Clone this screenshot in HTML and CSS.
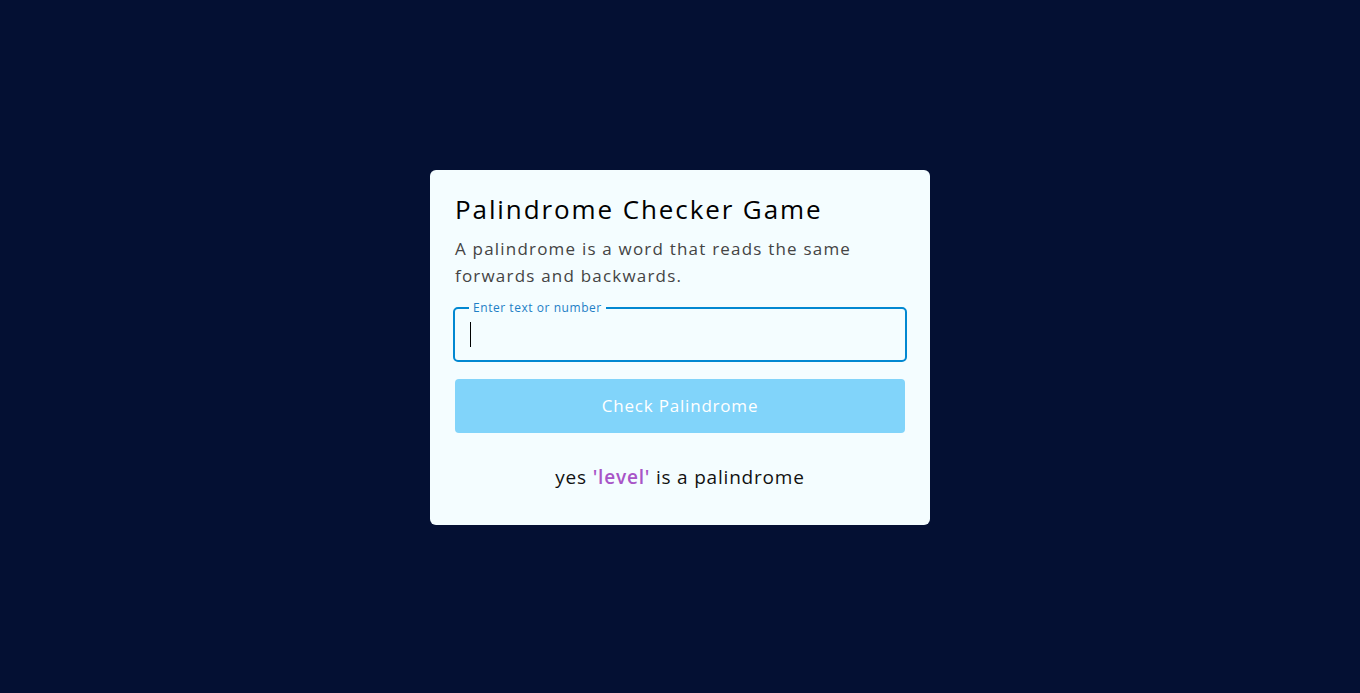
FILE: index.html
```html
<!DOCTYPE html>
<html lang="en">
<head>
<meta charset="utf-8">
<title>Palindrome Checker Game</title>
<link rel="stylesheet" href="styles.css">
</head>
<body>
<main class="page">
  <section class="card">
    <h1 class="title">Palindrome Checker Game</h1>
    <p class="desc">A palindrome is a word that reads the same forwards and backwards.</p>
    <fieldset class="field">
      <legend class="field-label">Enter text or number</legend>
      <div class="field-inner"><span class="caret"></span><input class="field-input" type="text" aria-label="Enter text or number"></div>
    </fieldset>
    <button class="btn" type="button">Check Palindrome</button>
    <p class="result">yes <span class="word">'level'</span> is a palindrome</p>
  </section>
</main>
</body>
</html>
```
FILE: styles.css
```css
* { box-sizing: border-box; }
html, body { margin: 0; padding: 0; height: 100%; }
body {
  background: #041033;
  font-family: "Open Sans", "Noto Sans", sans-serif;
}
.page {
  height: 100%;
  padding-top: 1px;
  display: flex;
  align-items: center;
  justify-content: center;
}
.card {
  width: 500px;
  background: #f4fdff;
  border-radius: 6px;
  padding: 21px 25px 35px;
  display: flex;
  flex-direction: column;
}
.title {
  margin: 0;
  font-size: 26px;
  font-weight: 400;
  letter-spacing: 1.9px;
  color: #000;
  line-height: 36px;
}
.desc {
  margin: 8px 0 14px;
  font-size: 17px;
  line-height: 27px;
  letter-spacing: 1.2px;
  color: #444;
}
.field {
  margin: 0 -2px;
  padding: 0 14px;
  border: 2px solid #0288d1;
  border-radius: 5px;
  height: 60px;
  position: relative;
  top: -1px;
}
.field-label {
  font-size: 12px;
  color: #1e7fc6;
  padding: 0 4px;
  letter-spacing: 0.55px;
  line-height: 12px;
}
.field-inner {
  position: relative;
  height: 40px;
  display: flex;
  align-items: center;
}
.caret {
  position: absolute;
  left: 1px;
  top: 8px;
  width: 1px;
  height: 25px;
  background: #000;
}
.field-input {
  border: 0;
  outline: 0;
  background: transparent;
  width: 100%;
  height: 100%;
  font: inherit;
  caret-color: transparent;
}
.btn {
  margin-top: 16px;
  height: 54px;
  border: 0;
  border-radius: 4px;
  background: #81d4fa;
  color: #fff;
  font-family: inherit;
  font-size: 17px;
  font-weight: 500;
  letter-spacing: 0.8px;
}
.result {
  margin: 31px 0 0;
  text-align: center;
  font-size: 19px;
  line-height: 26px;
  letter-spacing: 0.8px;
  color: #111;
}
.word {
  color: #a855c7;
  font-weight: 600;
}
```
